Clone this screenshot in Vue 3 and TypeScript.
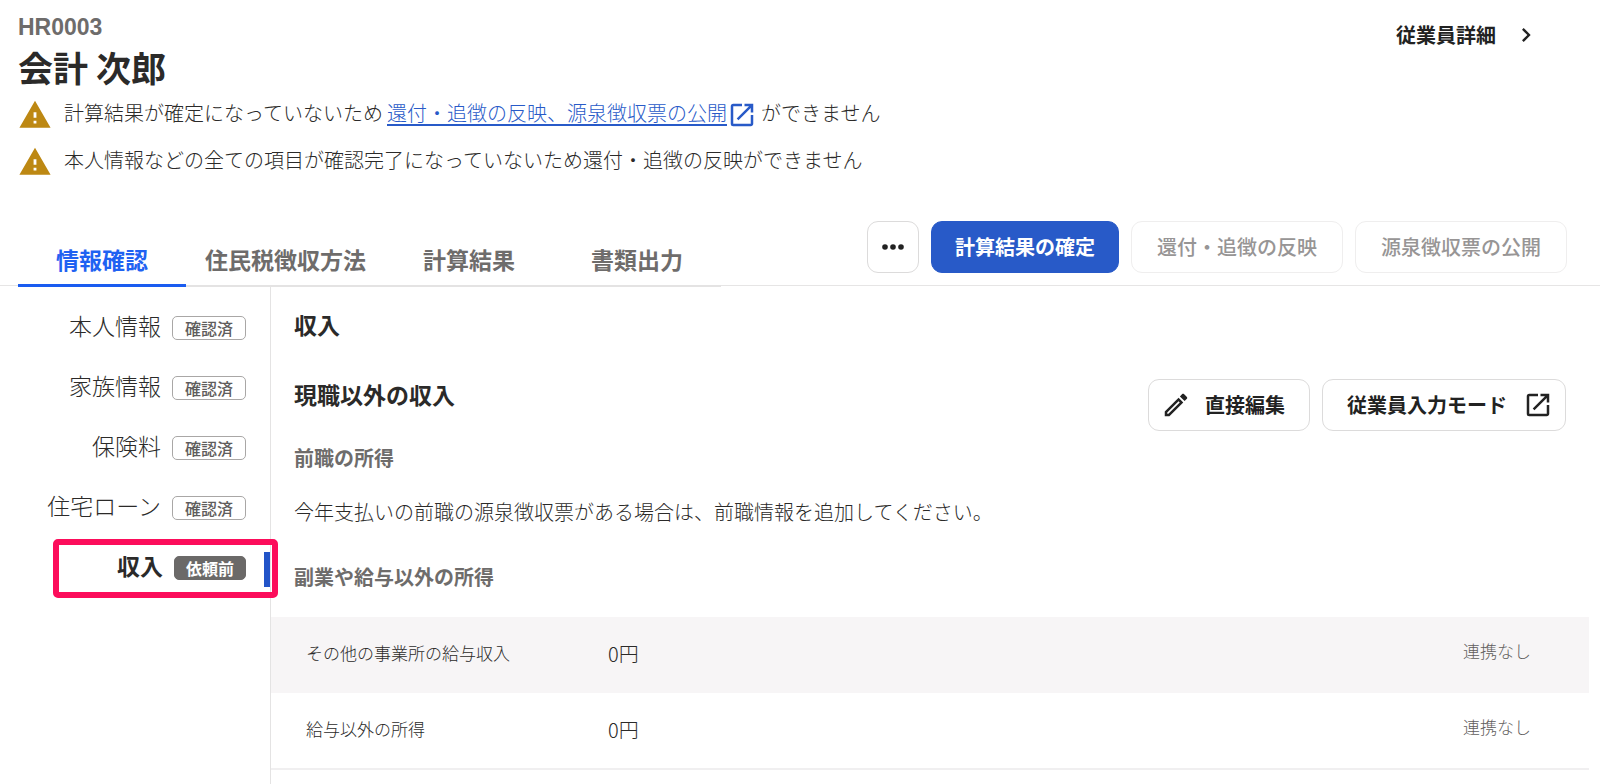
<script setup lang="ts">
import { ref } from 'vue'

interface Section {
  label: string
  status: string
}

interface IncomeRow {
  label: string
  value: string
  link: string
}

const tabs: string[] = ['情報確認', '住民税徴収方法', '計算結果', '書類出力']
const activeTab = ref(0)

const sections: Section[] = [
  { label: '本人情報', status: '確認済' },
  { label: '家族情報', status: '確認済' },
  { label: '保険料', status: '確認済' },
  { label: '住宅ローン', status: '確認済' },
  { label: '収入', status: '依頼前' },
]
const activeSection = ref(4)

const rows: IncomeRow[] = [
  { label: 'その他の事業所の給与収入', value: '0円', link: '連携なし' },
  { label: '給与以外の所得', value: '0円', link: '連携なし' },
]
</script>

<template>
  <div class="page">
    <header class="header">
      <div class="identity">
        <p class="code">HR0003</p>
        <h1 class="name">会計 次郎</h1>
      </div>
      <a class="detail" href="#detail">
        従業員詳細
        <svg class="chevron" viewBox="0 0 24 24" aria-hidden="true">
          <path d="M10 6 8.59 7.41 13.17 12l-4.58 4.59L10 18l6-6z" />
        </svg>
      </a>
    </header>

    <ul class="warnings">
      <li class="warning">
        <svg class="alert" viewBox="0 0 24 24" aria-hidden="true">
          <path d="M1 21h22L12 2 1 21zm12-3h-2v-2h2v2zm0-4h-2v-4h2v4z" />
        </svg>
        <p class="message">
          <span class="text">計算結果が確定になっていないため</span>
          <a class="help" href="#help">
            <span class="text help-text">還付・追徴の反映、源泉徴収票の公開</span>
            <svg class="icon" viewBox="0 0 24 24" aria-hidden="true">
              <path d="M19 19H5V5h7V3H5a2 2 0 0 0-2 2v14a2 2 0 0 0 2 2h14c1.1 0 2-.9 2-2v-7h-2v7zM14 3v2h3.59l-9.83 9.83 1.41 1.41L19 6.41V10h2V3h-7z" />
            </svg>
          </a>
          <span class="text">ができません</span>
        </p>
      </li>
      <li class="warning">
        <svg class="alert" viewBox="0 0 24 24" aria-hidden="true">
          <path d="M1 21h22L12 2 1 21zm12-3h-2v-2h2v2zm0-4h-2v-4h2v4z" />
        </svg>
        <p class="message">
          <span class="text">本人情報などの全ての項目が確認完了になっていないため還付・追徴の反映ができません</span>
        </p>
      </li>
    </ul>

    <div class="toolbar">
      <nav class="tabs" role="tablist">
        <button
          v-for="(tab, i) in tabs"
          :key="tab"
          type="button"
          role="tab"
          class="tab"
          :class="{ active: i === activeTab }"
          :aria-selected="i === activeTab"
          @click="activeTab = i"
        >{{ tab }}</button>
      </nav>
      <div class="actions">
        <button type="button" class="button more" aria-label="その他の操作">
          <svg class="dots" viewBox="0 0 24 24" aria-hidden="true">
            <circle cx="4" cy="12" r="2.8" />
            <circle cx="12" cy="12" r="2.8" />
            <circle cx="20" cy="12" r="2.8" />
          </svg>
        </button>
        <button type="button" class="button primary">計算結果の確定</button>
        <button type="button" class="button" disabled>還付・追徴の反映</button>
        <button type="button" class="button" disabled>源泉徴収票の公開</button>
      </div>
    </div>

    <div class="body">
      <ul class="sidebar">
        <li v-for="(section, i) in sections" :key="section.label" class="section" :class="{ current: i === activeSection }">
          <button type="button" class="section-button" @click="activeSection = i">
            <span class="section-label">{{ section.label }}</span>
            <span class="badge">{{ section.status }}</span>
          </button>
        </li>
      </ul>

      <main class="main">
        <h2 class="heading">収入</h2>
        <div class="subhead">
          <h3 class="heading">現職以外の収入</h3>
          <div class="edit-actions">
            <button type="button" class="button edit">
              <svg class="icon" viewBox="0 0 24 24" aria-hidden="true">
                <path d="m14.06 9.02.92.92L5.92 19H5v-.92l9.06-9.06M17.66 3c-.25 0-.51.1-.7.29l-1.83 1.83 3.75 3.75 1.83-1.83a.996.996 0 0 0 0-1.41l-2.34-2.34c-.2-.2-.45-.29-.71-.29zm-3.6 3.19L3 17.25V21h3.75L17.81 9.94l-3.75-3.75z" />
              </svg>
              直接編集
            </button>
            <button type="button" class="button mode">
              従業員入力モード
              <svg class="icon" viewBox="0 0 24 24" aria-hidden="true">
                <path d="M19 19H5V5h7V3H5a2 2 0 0 0-2 2v14a2 2 0 0 0 2 2h14c1.1 0 2-.9 2-2v-7h-2v7zM14 3v2h3.59l-9.83 9.83 1.41 1.41L19 6.41V10h2V3h-7z" />
              </svg>
            </button>
          </div>
        </div>
        <h4 class="minor">前職の所得</h4>
        <p class="note">今年支払いの前職の源泉徴収票がある場合は、前職情報を追加してください。</p>
        <h4 class="minor">副業や給与以外の所得</h4>
        <table class="incomes">
          <tbody>
            <tr v-for="row in rows" :key="row.label">
              <th scope="row">{{ row.label }}</th>
              <td class="value">{{ row.value }}</td>
              <td class="link">{{ row.link }}</td>
            </tr>
          </tbody>
        </table>
      </main>
    </div>
  </div>
</template>

<style>
body {
  margin: 0;
  background: #fff;
}
</style>

<style scoped>
.page {
  box-sizing: border-box;
  min-height: 100vh;
  display: flex;
  flex-direction: column;
  color: #2b2a29;
  font-family: "Noto Sans CJK JP", sans-serif;
  font-size: 20px;
  font-weight: 300;
  line-height: 30px;
}

.page *,
.page *::before,
.page *::after {
  box-sizing: border-box;
}

p,
h1,
h2,
h3,
h4,
ul {
  margin: 0;
  padding: 0;
}

ul {
  list-style: none;
}

button {
  font: inherit;
  color: inherit;
  background: none;
  cursor: pointer;
}

svg {
  display: block;
  flex: none;
  fill: currentColor;
}

.header {
  display: flex;
  justify-content: space-between;
  align-items: flex-start;
  padding: 14px 60px 0 18px;
}

.code {
  font-family: "Liberation Sans", Arial, sans-serif;
  font-size: 23px;
  font-weight: 700;
  line-height: 26px;
  color: #6e6c6b;
}

.name {
  margin-top: 3px;
  font-size: 35px;
  font-weight: 700;
  line-height: 48px;
}

.detail {
  display: flex;
  align-items: center;
  gap: 16px;
  margin-top: 6px;
  font-weight: 700;
  color: #222;
  text-decoration: none;
}

.chevron {
  width: 28px;
  height: 28px;
}

.icon {
  width: 30px;
  height: 30px;
}

.warnings {
  display: flex;
  flex-direction: column;
  gap: 12px;
  padding: 6px 18px 0;
}

.warning {
  display: flex;
  align-items: center;
  gap: 12px;
  height: 35px;
}

.alert {
  width: 34px;
  height: 34px;
  color: #bd8813;
}

.message,
.help {
  display: flex;
  align-items: center;
}

.message {
  gap: 4px;
}

.text {
  padding-bottom: 4px;
}

.help {
  color: #285ac8;
  text-decoration: none;
}

.help-text {
  text-decoration: underline;
  text-decoration-thickness: 2px;
  text-underline-offset: 3px;
}

.toolbar {
  display: flex;
  justify-content: space-between;
  align-items: flex-end;
  margin-top: 42px;
  padding: 0 33px 0 18px;
  border-bottom: 1px solid #e6e5e5;
}

.tabs {
  display: flex;
  margin-bottom: -2px;
}

.tab {
  display: flex;
  justify-content: center;
  align-items: center;
  min-width: 168px;
  height: 50px;
  padding: 0 19px 4px;
  border: 0;
  border-bottom: 2px solid #e4e3e3;
  font-size: 23px;
  font-weight: 700;
  color: #6e6c6b;
}

.tab.active {
  border-bottom: 3px solid #1a5cf0;
  color: #1f62f2;
}

.actions,
.edit-actions {
  display: flex;
  gap: 12px;
}

.actions {
  margin-bottom: 12px;
}

.button {
  display: flex;
  justify-content: center;
  align-items: center;
  height: 52px;
  padding: 0 25px;
  border: 1px solid #dcdbdb;
  border-radius: 11px;
  font-weight: 700;
  color: #222;
  white-space: nowrap;
}

.button:disabled {
  border-color: #efeeee;
  font-weight: 500;
  color: #979595;
  cursor: default;
}

.button.more {
  width: 52px;
  padding: 0;
}

.dots {
  width: 24px;
  height: 24px;
}

.button.primary {
  padding: 0 23px;
  border-color: #285ac8;
  background: #285ac8;
  color: #fff;
}

.button.edit {
  gap: 14px;
  padding: 0 24px 0 12px;
}

.button.mode {
  gap: 16px;
  padding: 0 12px 0 24px;
}

.body {
  flex: 1;
  display: flex;
}

.sidebar {
  width: 271px;
  flex: none;
  padding-top: 12px;
  border-right: 1px solid #e4e3e3;
}

.section {
  position: relative;
  height: 60px;
}

.section-button {
  display: flex;
  justify-content: flex-end;
  align-items: baseline;
  gap: 11px;
  width: 100%;
  padding: 12px 24px 0 0;
  border: 0;
  font-size: 23px;
}

.badge {
  padding: 0 12px;
  border: 1px solid #a9a7a6;
  border-radius: 5px;
  font-size: 16px;
  font-weight: 500;
  line-height: 22px;
  color: #5f5d5c;
}

.current .section-label {
  font-weight: 700;
}

.current .badge {
  padding: 0 11px;
  border-color: #6b6968;
  background: #6b6968;
  font-weight: 700;
  color: #fff;
}

.current::before {
  content: "";
  position: absolute;
  top: 14px;
  right: 0;
  width: 6px;
  height: 35px;
  background: #2254c8;
}

.current::after {
  content: "";
  position: absolute;
  top: 1px;
  right: -8px;
  width: 225px;
  height: 59px;
  border: 6px solid #fc0d5b;
  border-radius: 5px;
  pointer-events: none;
}

.main {
  flex: 1;
  min-width: 0;
  padding: 23px 11px 0 0;
}

.heading,
.minor,
.note {
  margin-left: 23px;
}

.heading {
  font-size: 23px;
  font-weight: 700;
}

.subhead {
  display: flex;
  justify-content: space-between;
  align-items: flex-start;
  margin-top: 40px;
  padding-right: 23px;
}

.minor {
  font-weight: 700;
  color: #6e6c6b;
}

.subhead + .minor {
  margin-top: 12px;
}

.note {
  margin: 24px 0 35px 23px;
}

.incomes {
  width: 100%;
  margin-top: 25px;
  border-collapse: collapse;
}

.incomes tr {
  height: 76px;
}

.incomes tr:nth-child(odd) {
  background: #f7f5f6;
}

.incomes tr:nth-child(even) {
  border-bottom: 2px solid #f0eff0;
}

.incomes th,
.incomes td {
  padding: 0;
  text-align: left;
  vertical-align: middle;
}

.incomes th {
  width: 337px;
  padding: 0 0 4px 35px;
  font-size: 17px;
  font-weight: 300;
}

.incomes .value {
  padding-bottom: 2px;
}

.incomes .link {
  padding: 0 58px 8px 0;
  font-size: 17px;
  text-align: right;
  color: #5f5d5c;
}
</style>
